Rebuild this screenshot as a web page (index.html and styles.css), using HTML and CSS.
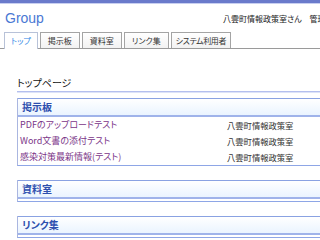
FILE: index.html
```html
<!DOCTYPE html>
<html lang="ja">
<head>
    <meta charset="UTF-8">
    <title>Group</title>
    <link rel="stylesheet" href="styles.css">
</head>
<body>
    <div class="topbar"></div>
    <div class="header">
        <a href="#" class="logo">Group</a>
        <div class="user">八雲町情報政策室さん　管理者</div>
    </div>
    <div class="tabs">
        <a href="#" class="tab active">トップ</a>
        <a href="#" class="tab">掲示板</a>
        <a href="#" class="tab">資料室</a>
        <a href="#" class="tab">リンク集</a>
        <a href="#" class="tab">システム利用者</a>
    </div>
    <div class="content">
        <h2 class="page-title">トップページ</h2>

        <div class="box">
            <div class="box-head">掲示板</div>
            <div class="box-body">
                <div class="row"><a href="#">PDFのアップロードテスト</a><span>八雲町情報政策室</span></div>
                <div class="row"><a href="#">Word文書の添付テスト</a><span>八雲町情報政策室</span></div>
                <div class="row"><a href="#">感染対策最新情報(テスト)</a><span>八雲町情報政策室</span></div>
            </div>
        </div>

        <div class="box">
            <div class="box-head">資料室</div>
            <div class="box-body empty"></div>
        </div>

        <div class="box">
            <div class="box-head">リンク集</div>
            <div class="box-body empty"></div>
        </div>
    </div>
</body>
</html>
```

FILE: styles.css
```css
html, body {
    overflow: hidden;
}
body {
    margin: 0;
    width: 360px;
    font-family: "Noto Sans CJK JP", "Liberation Sans", sans-serif;
    font-feature-settings: "palt";
    background: #fff;
    color: #222;
}
.topbar {
    height: 3px;
    background: #6a7acb;
    border-bottom: 1px solid #c8cff0;
}
.header {
    display: grid;
    grid-template-columns: 218px auto;
    align-items: center;
    height: 28px;
    padding-left: 5px;
}
.header .logo {
    font-family: "Liberation Sans", Arial, sans-serif;
    font-size: 14px;
    color: #4a78d4;
    text-decoration: none;
}
.header .user {
    font-size: 8px;
    white-space: nowrap;
    color: #222;
}
.tabs {
    display: flex;
    gap: 2px;
    padding-left: 4px;
    border-bottom: 1px solid #9a9a9a;
    height: 16px;
}
.tab {
    display: block;
    height: 15px;
    line-height: 15px;
    padding: 0 7px;
    font-size: 8px;
    color: #333;
    text-decoration: none;
    border: 1px solid #a4a4a4;
    border-bottom: none;
    background: linear-gradient(#ffffff, #f2f2f2);
}
.tab:last-child {
    padding: 0 4px;
    letter-spacing: -0.4px;
}
.tab.active {
    color: #2f86e6;
    border-color: #b8c2d8;
    background: #fff;
    height: 16px;
    padding: 0 6px;
}
.content {
    padding-left: 17px;
}
.page-title {
    margin: 27px 0 0;
    font-size: 10px;
    font-weight: normal;
    line-height: 14px;
    padding-bottom: 1px;
    color: #111;
    border-bottom: 1px solid #b4bfee;
    box-shadow: 0 1px 0 #dde3f7;
}
.box {
    margin-top: 6px;
    border-left: 1px solid #aab6e0;
    border-bottom: 1px solid #8ea6e6;
}
.box + .box {
    margin-top: 14px;
}
.box-head {
    height: 16px;
    line-height: 16px;
    padding-left: 4px;
    font-size: 10px;
    font-weight: bold;
    color: #2e4fae;
    border-top: 1px solid #8aa2e2;
    border-bottom: 2px solid #9fb3ea;
    background: linear-gradient(#ffffff, #eaf4ff);
}
.box-body {
    padding-left: 2px;
}
.box-body.empty {
    height: 2px;
}
.row {
    display: grid;
    grid-template-columns: 207px auto;
    height: 16px;
    line-height: 16px;
    white-space: nowrap;
}
.row a {
    font-size: 9px;
    color: #7b3588;
    text-decoration: none;
}
.row span {
    font-size: 8.3px;
    color: #333;
}
```
